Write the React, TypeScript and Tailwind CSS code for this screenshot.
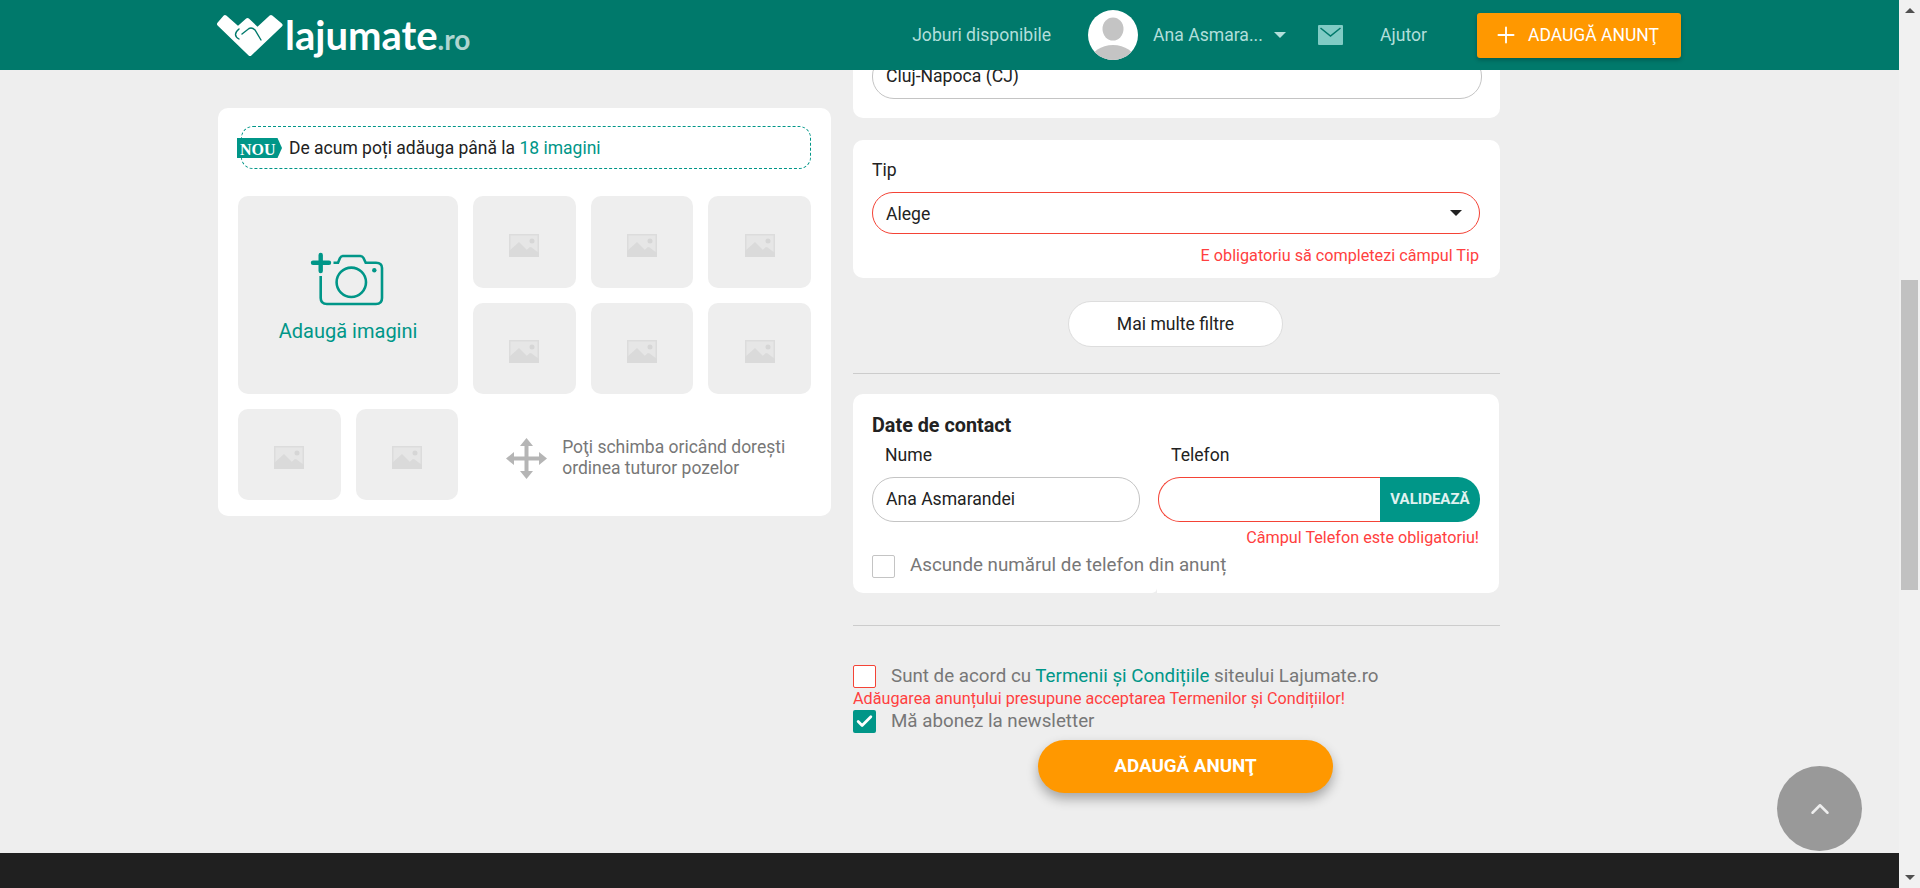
import { Check, ChevronUp, Plus } from "lucide-react";

const ro = "font-['Roboto',sans-serif]";

function TileIcon() {
  return (
    <svg width="30" height="23" viewBox="0 0 30 23" className="mt-[6px]">
      <rect width="30" height="23" fill="#dcdcdc" />
      <rect x="1.5" y="1.5" width="27" height="20" fill="#e6e6e6" />
      <path d="M1.5 20 L10 9 L17 17 L21 13 L28.5 20 V23 H1.5Z" fill="#d6d6d6" />
      <path d="M0 17 L10 8 L18 16 L22 13 L30 19 V23 H0Z" fill="#dadada" />
      <circle cx="23" cy="7" r="2.5" fill="#d6d6d6" />
    </svg>
  );
}

function Tile() {
  return (
    <div className="bg-[#eeeeee] rounded-[10px] flex items-center justify-center">
      <TileIcon />
    </div>
  );
}

function CameraIcon() {
  return (
    <svg width="100" height="70" viewBox="0 0 100 70" fill="none" stroke="#009688" className="ml-[2px]">
      <path d="M14 22.7 H30 M21.7 15 V31" strokeWidth="4.4" strokeLinecap="round" />
      <path
        d="M21.7 36 V58 Q21.7 64 28 64 H77 Q83 64 83 58 V28 Q83 22.7 77 22.7 H66.7 L64.5 18 Q63.5 16 61 16 H44 Q42 16 41 18 L39 22.7 H34.5"
        strokeWidth="2.6"
      />
      <circle cx="52.3" cy="42.3" r="14.7" strokeWidth="2.6" />
      <circle cx="75.3" cy="30.3" r="2.2" fill="#009688" stroke="none" />
    </svg>
  );
}

function MoveIcon() {
  return (
    <svg width="41" height="41" viewBox="0 0 41 41" fill="#b5b5b5" className="shrink-0">
      <path d="M18.5 6 H22.5 V18.5 H35 V22.5 H22.5 V35 H18.5 V22.5 H6 V18.5 H18.5Z" />
      <path d="M20.5 0 L27 8 H14Z M20.5 41 L14 33 H27Z M0 20.5 L8 14 V27Z M41 20.5 L33 27 V14Z" />
    </svg>
  );
}

function Logo() {
  return (
    <div className="flex items-center">
      <svg width="72" height="50" viewBox="0 0 72 50">
        <path
          d="M11 7 L24 18.5 L33.5 10 L43.5 19.5 L57 7 L66.5 15 L36 44 L5 14Z"
          fill="#fff"
          stroke="#fff"
          strokeWidth="4"
          strokeLinejoin="round"
        />
        <path
          d="M25 19 Q18 25 25 29 M28 24 L35 18.5 Q38 17 41 20 L47 30"
          fill="none"
          stroke="#00796b"
          strokeWidth="1.4"
          strokeLinecap="round"
        />
      </svg>
      <div className="flex items-baseline -ml-px font-['Lato',sans-serif] font-bold text-white leading-none">
        <span className="text-[40px]">lajumate</span>
        <span className="text-[28px] text-white/70">.ro</span>
      </div>
    </div>
  );
}

function Header() {
  return (
    <header className="h-[70px] shrink-0 bg-[#00796b] flex items-center justify-between pl-[214px] pr-[218px]">
      <Logo />
      <nav className="flex items-center text-[17.6px] text-[#b2dfdb]">
        <span>Joburi disponibile</span>
        <div className="ml-[37px] w-[50px] h-[50px] rounded-full bg-white overflow-hidden">
          <svg width="50" height="50" viewBox="0 0 50 50" fill="#c4c4c4">
            <ellipse cx="25" cy="19" rx="10.5" ry="11.5" />
            <ellipse cx="25" cy="50" rx="22" ry="15" />
          </svg>
        </div>
        <span className="ml-[15px] w-[108px] whitespace-nowrap">Ana Asmara...</span>
        <span className="ml-[13px] w-0 h-0 border-x-[6.5px] border-x-transparent border-t-[6px] border-t-[#b2dfdb]" />
        <svg width="25" height="20" viewBox="0 0 25 20" className="ml-[32px]">
          <rect width="25" height="20" rx="1" fill="#80cbc4" />
          <path d="M2.5 3 L12.5 11 L22.5 3" fill="none" stroke="#00796b" strokeWidth="1.6" />
        </svg>
        <span className="ml-[37px]">Ajutor</span>
        <button className="ml-[50px] w-[204px] h-[45px] rounded-[3px] bg-[#ff9800] text-white flex items-center pl-[20px] shadow-[0_2px_4px_rgba(0,0,0,0.25)]">
          <Plus size={26} strokeWidth={1.7} className="-ml-[4px]" />
          <span className="ml-[9px] text-[17.5px] whitespace-nowrap">ADAUGĂ ANUNŢ</span>
        </button>
      </nav>
    </header>
  );
}

function LeftCard() {
  return (
    <section className="mt-[38px] w-[613px] h-[408px] shrink-0 bg-white rounded-[10px] px-[20px] pt-[18px]">
      <div className="relative ml-[3px] h-[43px] border border-dashed border-[#009688] rounded-[12px] flex items-center pl-[47px] pt-[2px] text-[17.5px] text-[#222222]">
        <span className="absolute -left-[5px] top-[11px] w-[45px] h-[20px] bg-[#009688] [clip-path:polygon(0_0,90%_0,100%_50%,90%_100%,0_100%)] text-white font-['Liberation_Serif',serif] font-bold text-[16px] leading-[24px] pl-[3px] whitespace-nowrap">
          NOU
        </span>
        <span>
          De acum poți adăuga până la <span className="text-[#009688]">18 imagini</span>
        </span>
      </div>
      <div className="mt-[27px] grid grid-cols-5 grid-rows-[92px_91px_91px] gap-[15px]">
        <div className="col-span-2 row-span-2 bg-[#eeeeee] rounded-[10px] flex flex-col items-center pt-[44px]">
          <CameraIcon />
          <span className="mt-[10px] text-[20px] leading-[22px] text-[#009688]">Adaugă imagini</span>
        </div>
        <Tile />
        <Tile />
        <Tile />
        <Tile />
        <Tile />
        <Tile />
        <Tile />
        <Tile />
        <div className="col-span-3 flex items-center pl-[33px] pt-[7px]">
          <MoveIcon />
          <p className="ml-[15px] text-[17.5px] leading-[21px] text-[#777777]">
            Poţi schimba oricând dorești
            <br />
            ordinea tuturor pozelor
          </p>
        </div>
      </div>
    </section>
  );
}

function RightColumn() {
  return (
    <div className="w-[647px] shrink-0">
      <section className="h-[48px] bg-white rounded-b-[10px] overflow-hidden pl-[19px] pr-[18px]">
        <div className="-mt-[16px] h-[45px] border border-[#c4c4c4] rounded-[22px] flex items-center pl-[13px] text-[17.6px] text-[#222222]">
          Cluj-Napoca (CJ)
        </div>
      </section>

      <section className="mt-[22px] h-[138px] bg-white rounded-[10px] pl-[19px] pr-[20px] pt-[18px]">
        <div className="text-[17.6px] leading-[24px] text-[#222222]">Tip</div>
        <div className="mt-[10px] h-[42px] border border-[#f44336] rounded-[21px] flex items-center justify-between pl-[13px] pr-[17px] text-[17.6px] text-[#222222]">
          <span className="pt-[2px]">Alege</span>
          <span className="w-0 h-0 border-x-[6px] border-x-transparent border-t-[6px] border-t-[#222222]" />
        </div>
        <div className="mt-[12px] pr-px text-right text-[16.2px] leading-[20px] text-[#ff4040]">
          E obligatoriu să completezi câmpul Tip
        </div>
      </section>

      <button className="block mt-[23px] ml-[215px] w-[215px] h-[46px] bg-white border border-[#dddddd] rounded-[23px] text-[17.6px] text-[#222222]">
        Mai multe filtre
      </button>

      <hr className="mt-[26px] border-t border-[#cccccc]" />

      <section className="relative mt-[20px] h-[199px] w-[646px] bg-white rounded-[10px] pl-[19px] pr-[19px] pt-[20px]">
        <h2 className="text-[19.8px] leading-[24px] font-bold text-[#222222]">Date de contact</h2>
        <div className="mt-[5px] flex gap-[18px]">
          <div className="w-[268px]">
            <div className="pl-[13px] text-[17.6px] leading-[24px] text-[#222222]">Nume</div>
            <div className="mt-[10px] h-[45px] border border-[#c4c4c4] rounded-[22px] flex items-center pl-[13px] text-[17.6px] text-[#222222]">
              Ana Asmarandei
            </div>
          </div>
          <div className="w-[322px]">
            <div className="pl-[13px] text-[17.6px] leading-[24px] text-[#222222]">Telefon</div>
            <div className="mt-[10px] h-[45px] flex">
              <div className="w-[222px] border border-r-0 border-[#f44336] rounded-l-[22px]" />
              <button className="w-[100px] bg-[#009688] rounded-r-[22px] text-[15px] font-bold text-[#e0f2f1]">
                VALIDEAZĂ
              </button>
            </div>
          </div>
        </div>
        <div className="mt-[6px] pr-px text-right text-[16.2px] leading-[20px] text-[#ff4040]">
          Câmpul Telefon este obligatoriu!
        </div>
        <label className="mt-[7px] h-[23px] flex items-center gap-[15px] text-[18.75px] text-[#777777]">
          <span className="w-[23px] h-[23px] bg-white border border-[#c4c4c4] rounded-[2px]" />
          <span className="-mt-[2px]">Ascunde numărul de telefon din anunț</span>
        </label>
        <div className="absolute bottom-0 left-[299px] w-[5px] h-[5px] bg-[#eeeeee]">
          <div className="w-full h-full bg-white rounded-br-[5px]" />
        </div>
      </section>

      <hr className="mt-[32px] border-t border-[#cccccc]" />

      <label className="mt-[39px] flex items-center gap-[15px] h-[23px] text-[18.75px] text-[#777777]">
        <span className="w-[23px] h-[23px] bg-white border border-[#f44336] rounded-[2px]" />
        <span>
          Sunt de acord cu <span className="text-[#009688]">Termenii și Condițiile</span> siteului Lajumate.ro
        </span>
      </label>
      <div className="mt-px text-[16.2px] leading-[20px] text-[#ff4040]">
        Adăugarea anunțului presupune acceptarea Termenilor și Condițiilor!
      </div>
      <label className="mt-px flex items-center gap-[15px] h-[23px] text-[18.75px] text-[#777777]">
        <span className="w-[23px] h-[23px] bg-[#009688] rounded-[2px] flex items-center justify-center text-white">
          <Check size={19} strokeWidth={3.5} />
        </span>
        Mă abonez la newsletter
      </label>
      <button className="block mt-[7px] ml-[185px] w-[295px] h-[53px] rounded-[27px] bg-[#ff9800] text-white text-[18.8px] font-bold shadow-[0_6px_12px_rgba(0,0,0,0.3)]">
        ADAUGĂ ANUNŢ
      </button>
    </div>
  );
}

function Scrollbar() {
  return (
    <div className="w-[21px] shrink-0 bg-[#f1f1f1] flex flex-col items-center">
      <div className="h-[21px] flex items-center justify-center">
        <span className="w-0 h-0 border-x-[5px] border-x-transparent border-b-[5px] border-b-[#505050]" />
      </div>
      <div className="mt-[259px] w-[17px] h-[310px] bg-[#c1c1c1]" />
      <div className="mt-auto h-[21px] flex items-center justify-center">
        <span className="w-0 h-0 border-x-[5px] border-x-transparent border-t-[5px] border-t-[#505050]" />
      </div>
    </div>
  );
}

export default function App() {
  return (
    <div className={`${ro} relative flex h-[888px] w-full overflow-hidden bg-[#eeeeee]`}>
      <div className="flex-1 min-w-0 flex flex-col">
        <Header />
        <main className="flex-1 min-h-0 overflow-hidden flex pl-[218px] gap-[22px]">
          <LeftCard />
          <RightColumn />
        </main>
        <footer className="h-[35px] shrink-0 bg-[#202020]" />
      </div>
      <Scrollbar />
      <button className="absolute left-[1777px] top-[766px] w-[85px] h-[85px] rounded-full bg-[#999999] flex items-center justify-center text-[#eeeeee]">
        <ChevronUp size={30} strokeWidth={2} />
      </button>
    </div>
  );
}
